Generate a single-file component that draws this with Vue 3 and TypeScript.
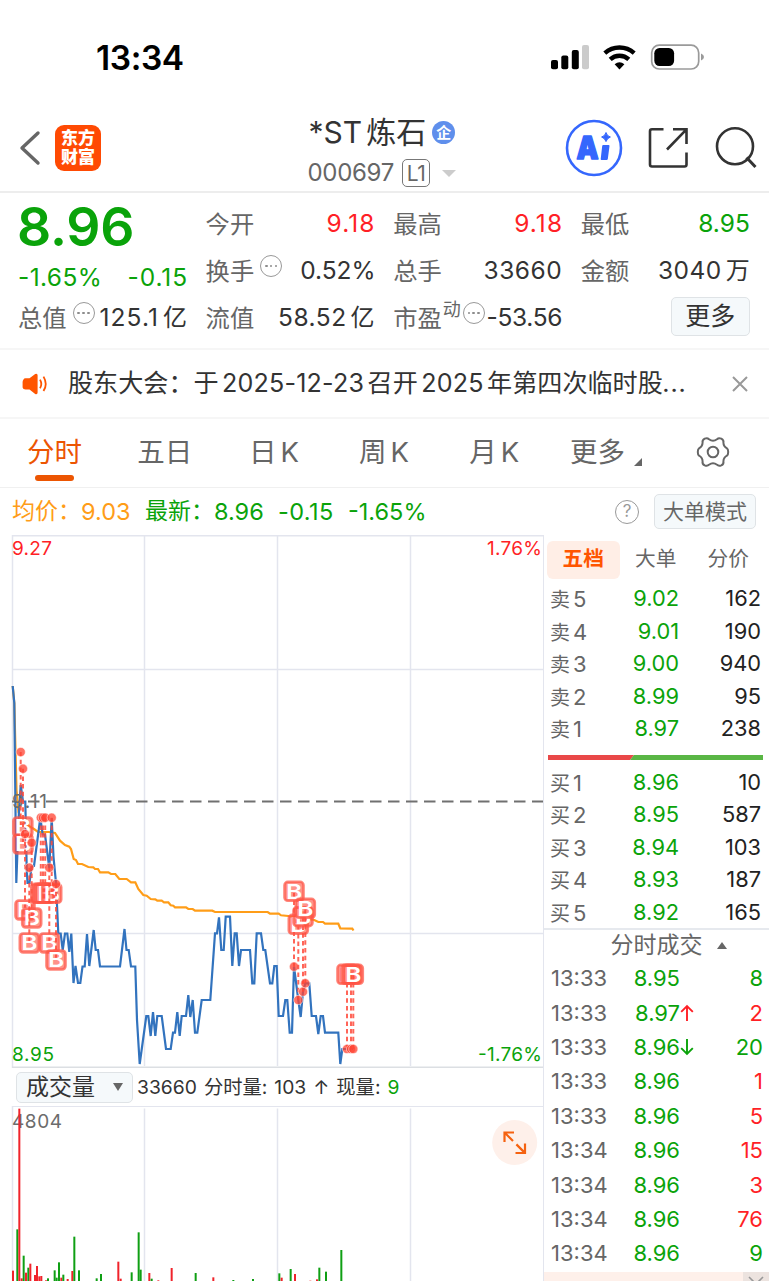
<script setup lang="ts">
interface Level { label: string; n: number; price: string; vol: string }
interface Trade { time: string; price: string; dir?: 'up' | 'down'; vol: string; tone: 'red' | 'green' }
interface Marker { x: number; dot: number; badge: number }
interface Bar { x: number; top: number; up: boolean }

const notice: string[] = ['股东大会：于', '2025-12-23', '召开', '2025', '年第四次临时股', '...']

const tabs: { zh: string; en?: string }[] = [
  { zh: '分时' },
  { zh: '五日' },
  { zh: '日', en: 'K' },
  { zh: '周', en: 'K' },
  { zh: '月', en: 'K' },
]

const sells: Level[] = [
  { label: '卖', n: 5, price: '9.02', vol: '162' },
  { label: '卖', n: 4, price: '9.01', vol: '190' },
  { label: '卖', n: 3, price: '9.00', vol: '940' },
  { label: '卖', n: 2, price: '8.99', vol: '95' },
  { label: '卖', n: 1, price: '8.97', vol: '238' },
]
const buys: Level[] = [
  { label: '买', n: 1, price: '8.96', vol: '10' },
  { label: '买', n: 2, price: '8.95', vol: '587' },
  { label: '买', n: 3, price: '8.94', vol: '103' },
  { label: '买', n: 4, price: '8.93', vol: '187' },
  { label: '买', n: 5, price: '8.92', vol: '165' },
]
const trades: Trade[] = [
  { time: '13:33', price: '8.95', vol: '8', tone: 'green' },
  { time: '13:33', price: '8.97', dir: 'up', vol: '2', tone: 'red' },
  { time: '13:33', price: '8.96', dir: 'down', vol: '20', tone: 'green' },
  { time: '13:33', price: '8.96', vol: '1', tone: 'red' },
  { time: '13:33', price: '8.96', vol: '5', tone: 'red' },
  { time: '13:34', price: '8.96', vol: '15', tone: 'red' },
  { time: '13:34', price: '8.96', vol: '3', tone: 'red' },
  { time: '13:34', price: '8.96', vol: '76', tone: 'red' },
  { time: '13:34', price: '8.96', vol: '9', tone: 'green' },
]

const priceLine =
  '12.7,686 14.3,703 16.3,883 18.7,817 20.7,785 23,801.5 25.3,801.5 26.7,868 27.5,883 29.5,883 31.5,867 34,866 40.3,818 42.7,834.5 45,834.5 49.3,868 51.7,818 53.5,857 56,883 58.3,933.5 60.7,933.5 62.7,950 65,933.5 67.3,933.5 69.3,952 71.3,933.5 73.5,983 75.5,966 78,983 80.3,983 82.5,966.5 84.7,966.5 87,934 89.3,966 93.7,930 95.7,950 98,950 100,966.5 120,966.5 124.5,929 126.5,950 128.7,950 131,966.5 135.3,966.5 137,1020 139.7,1064 146.3,1016 148.3,1016 150.7,1036 153,1012 155.3,1036 157.3,1016 161.7,1016 166,1049 170.7,1049 173,1032.7 175,1032.7 177.3,1012 179.7,1036 181.7,1016 186,1016 188.3,995 190.3,1017 192.7,1000 195,1032.7 197.3,1032.7 201.7,1000 210.3,1000 215,933.3 217,933.3 219,917.3 221.3,950 223.7,950 225.7,916.7 230,916.7 232.3,966 234.7,933.3 236.7,933.3 239,966 241,950 250,950 252.3,983.3 254.3,983.3 256.7,933.3 261,933.3 263.3,950 265.3,950 270,983.3 272.3,983.3 274.3,966 276.7,966 278.7,1016 283,1016 285.3,1000 287.3,1000 289.7,1032.7 292,1032.7 294,966.7 298.3,1000 300.7,1017 303,991.7 305.3,983.3 309.3,983.3 311.7,1016 316,1016 318.3,1034 320.7,1016 323,1016 325,1032.7 338.3,1032.7 340.3,1064 342.3,1049 353,1049'
const avgLine =
  '12.7,686 14.3,703 16.5,790 18.5,812 21,819 25,823 29,826 31.7,827.7 34,829 38,832 49,832 55,833 60,840.7 65,845 69.3,846.7 71,849 73.7,859 76,860 78,864 82,864 88.3,867 93.3,867.3 95,869 98,869 100,872.3 108.3,872.3 111,874 115.3,874 119.3,879 126.7,879 131,882.3 135.3,882.3 138.3,889 143.3,895 146.7,895.7 150.7,899 155.3,899.3 157.3,900.7 161.7,900.7 164,902.3 168.3,902.3 170.7,905.3 173.3,905.7 175,907.3 186,907.3 188.3,909 192.7,909 195,910.7 212.3,910.7 215,912 267.7,912 270,913.7 278.7,913.7 281,915.3 288.3,916 298,918 314.3,920 318.3,922 323,922 325,923.7 338.3,923.7 340.3,928.3 352.3,928.7 353.5,930.5'

const markers: Marker[] = [
  { x: 20.7, dot: 752, badge: 827 },
  { x: 23, dot: 768.7, badge: 844 },
  { x: 25, dot: 834, badge: 910 },
  { x: 31.7, dot: 842.7, badge: 918 },
  { x: 29.3, dot: 867.7, badge: 943 },
  { x: 40.8, dot: 817.7, badge: 893.3 },
  { x: 43, dot: 817.7, badge: 893.3 },
  { x: 45.2, dot: 817.7, badge: 893.3 },
  { x: 51.7, dot: 817.7, badge: 893.3 },
  { x: 49.3, dot: 867.7, badge: 943 },
  { x: 56, dot: 884, badge: 960 },
  { x: 294, dot: 966.7, badge: 891.3 },
  { x: 298.3, dot: 1000, badge: 924.3 },
  { x: 303, dot: 991.7, badge: 916.7 },
  { x: 305.3, dot: 983.3, badge: 908.3 },
  { x: 347, dot: 1049, badge: 974.3 },
  { x: 351, dot: 1049, badge: 974.3 },
  { x: 353.3, dot: 1049, badge: 974.3 },
]

const rawBars: [number, number, 0 | 1][] = [
  [39, 692, 1], [52, 568, 0], [58, 206, 1], [65, 715, 1], [71, 647, 0], [78, 698, 1], [85, 683, 0], [91, 671, 1],
  [105, 705, 1], [111, 678, 1], [118, 709, 1], [124, 708, 1], [138, 721, 1], [144, 715, 0], [164, 691, 0],
  [170, 713, 0], [177, 667, 0], [184, 713, 1], [190, 704, 0], [203, 717, 1], [217, 693, 1], [223, 590, 0],
  [237, 691, 0], [290, 715, 0], [303, 702, 0], [355, 665, 1], [362, 716, 1], [395, 697, 0], [416, 577, 0],
  [422, 689, 0], [448, 699, 1], [455, 716, 0], [475, 721, 1], [515, 684, 1], [587, 699, 0], [640, 712, 1],
  [700, 720, 0], [759, 717, 0], [838, 700, 0], [845, 713, 1], [872, 687, 0], [885, 702, 1], [931, 722, 1],
  [951, 718, 1], [958, 683, 0], [978, 695, 0], [1024, 630, 0],
]
const bars: Bar[] = rawBars.map(([x, y, up]) => ({ x: x / 3 - 1, top: 1040 + y / 3, up: up === 1 }))
const vGrid: number[] = [144.5, 277.5, 410.5]
</script>

<template>
  <div class="phone">
    <header class="status">
      <span class="clock">13:34</span>
      <svg class="status-icons" width="156" height="28" viewBox="550 43 156 28">
        <rect x="551" y="60" width="7" height="9.3" rx="2" />
        <rect x="561.3" y="55.5" width="7" height="13.8" rx="2" />
        <rect x="571.8" y="50" width="7" height="19.3" rx="2" />
        <rect x="582" y="45" width="7" height="24.3" rx="2" fill="#cbcbcb" />
        <g fill="none" stroke="#000" stroke-width="4.4">
          <path d="M604.8 53.2A22 22 0 0 1 634.2 53.2" />
          <path d="M610.2 59.4A13.6 13.6 0 0 1 628.8 59.4" />
        </g>
        <path d="M614.6 64.2Q619.5 60.3 624.4 64.2L619.5 69.4Z" />
        <rect x="651.7" y="45.2" width="47" height="23.8" rx="7.6" fill="none" stroke="#9a9a9a" stroke-width="1.7" />
        <path d="M701 53.5Q704 54.6 704 57Q704 59.4 701 60.5Z" fill="#9a9a9a" />
        <rect x="654.3" y="48" width="19.8" height="18" rx="5.2" />
      </svg>
    </header>

    <nav class="nav">
      <div class="nav-left">
        <svg width="22" height="36" viewBox="0 0 22 36"><path d="M19 3L3 18L19 33" fill="none" stroke="#666" stroke-width="3.4" stroke-linecap="round" stroke-linejoin="round" /></svg>
        <div class="brand"><span>东方</span><span>财富</span></div>
      </div>
      <div class="nav-title">
        <div class="name">
          <span class="st">*ST</span><span class="zh">炼石</span>
          <span class="qi">企</span>
        </div>
        <div class="code"><span>000697</span><span class="l1">L1</span><i class="caret"></i></div>
      </div>
      <svg class="nav-icons" width="194" height="60" viewBox="564 118 194 60">
        <circle cx="594" cy="148" r="27" fill="none" stroke="#3567fd" stroke-width="2.6" />
        <text x="576.5" y="158.6" class="ai" textLength="22" lengthAdjust="spacingAndGlyphs">A</text>
        <path d="M603.2 145H608.6Q609.6 145 609.5 146L607.8 159Q607.6 160 606.6 160H601.6Q600.5 160 600.7 159L602.2 146Q602.3 145 603.2 145Z" fill="#3567fd" />
        <path d="M606 132.5Q607 136.2 610.4 137Q607 138.2 606 141.6Q605 138.2 601.6 137Q605 136.2 606 132.5Z" fill="#3567fd" stroke="#3567fd" stroke-width="1" />
        <g fill="none" stroke="#333" stroke-width="2.6">
          <path d="M663.5 129.3H652Q650 129.3 650 131.3V164.5Q650 166.5 652 166.5H684.5Q686.5 166.5 686.5 164.5V152.5" />
          <path d="M673 129.3H686.5V144M686 129.8L667 149.5" />
          <circle cx="735" cy="146.3" r="18" />
          <path d="M746.5 157.5L755.5 167" stroke-width="3" />
        </g>
      </svg>
    </nav>

    <section class="quote">
      <div class="col first">
        <div class="big">8.96</div>
        <div class="row chg"><span>-1.65%</span><span>-0.15</span></div>
        <div class="row r3"><label>总值</label><i class="dots"><u></u><u></u><u></u></i><b class="w1">125.1<em>亿</em></b></div>
      </div>
      <div class="col">
        <div class="row"><label>今开</label><b class="red w1">9.18</b></div>
        <div class="row"><label>换手</label><i class="dots"><u></u><u></u><u></u></i><b class="w0">0.52%</b></div>
        <div class="row"><label>流值</label><b class="w2">58.52<em>亿</em></b></div>
      </div>
      <div class="col">
        <div class="row"><label>最高</label><b class="red w1">9.18</b></div>
        <div class="row"><label>总手</label><b class="w2">33660</b></div>
        <div class="row pe"><label>市盈</label><sup>动</sup><i class="dots"><u></u><u></u><u></u></i><b>-53.56</b></div>
      </div>
      <div class="col">
        <div class="row"><label>最低</label><b class="green">8.95</b></div>
        <div class="row"><label>金额</label><b class="w2">3040<em>万</em></b></div>
        <div class="row end"><button class="more">更多</button></div>
      </div>
    </section>

    <section class="notice">
      <svg width="27" height="22" viewBox="0 0 27 22">
        <path d="M1.5 6.5Q2 5.3 3.5 5.2H7.5L13.2 0.9Q15.6 0 15.6 2.3V19.6Q15.6 21.8 13.2 21L7.5 16.4H3.5Q1 16.4 .6 14.5V9Q.6 7.5 1.5 6.5Z" fill="#ff5500" />
        <path d="M18 6.6Q20.6 11 18 15.2M21.5 3.6Q26 11 21.5 18" fill="none" stroke="#ff5500" stroke-width="1.8" />
      </svg>
      <p><span v-for="(s, i) in notice" :key="i" :class="{ num: i % 2 === 1 }">{{ s }}</span></p>
      <svg width="16" height="16" viewBox="0 0 16 16"><path d="M1 1L15 15M15 1L1 15" stroke="#999" stroke-width="2" /></svg>
    </section>

    <section class="tabs">
      <div v-for="(t, i) in tabs" :key="i" class="tab" :class="{ on: i === 0 }">
        <span>{{ t.zh }}</span><span v-if="t.en" class="k">{{ t.en }}</span>
      </div>
      <div class="tab last"><span>更多</span><i class="corner"></i></div>
      <svg class="gear" width="34" height="32" viewBox="-17 -16 34 32">
        <g fill="none" stroke="#666" stroke-width="2">
          <circle r="5.3" />
          <path d="M-8.3 -13.4Q-5.5 -14.5 -4 -12.7Q0 -9.8 4 -12.7Q5.5 -14.5 8.3 -13.4Q11 -12 10.4 -9.4Q10.5 -5.3 14 -3.6Q15.2 -2.8 15.2 0Q15.2 2.8 14 3.6Q10.5 5.3 10.4 9.4Q11 12 8.3 13.4Q5.5 14.5 4 12.7Q0 9.8 -4 12.7Q-5.5 14.5 -8.3 13.4Q-11 12 -10.4 9.4Q-10.5 5.3 -14 3.6Q-15.2 2.8 -15.2 0Q-15.2 -2.8 -14 -3.6Q-10.5 -5.3 -10.4 -9.4Q-11 -12 -8.3 -13.4Z" />
        </g>
      </svg>
    </section>

    <section class="legend">
      <span class="avg zh">均价：</span><span class="avg n1">9.03</span>
      <span class="green zh">最新：</span><span class="green n2">8.96</span><span class="green n3">-0.15</span><span class="green n4">-1.65%</span>
      <span class="help">?</span>
      <button class="mode">大单模式</button>
    </section>

    <main class="main">
      <div class="left">
        <svg class="chart" width="544" height="533" viewBox="0 535 544 533">
          <g stroke="#e3e5ee" stroke-width="1.5" fill="none">
            <path d="M12 535.7H544M12 669.5H544M12 933.5H544M12.5 535V1068" />
            <path v-for="x in vGrid" :key="x" :d="`M${x} 535V1066`" />
          </g>
          <path d="M12 1067.3H544" stroke="#dcdfe3" stroke-width="1.5" />
          <path d="M12 801.6H544" stroke="#707070" stroke-width="2" stroke-dasharray="11.5 6.5" stroke-dashoffset="2" />
          <polyline :points="avgLine" fill="none" stroke="#ff9d18" stroke-width="2.2" />
          <polyline :points="priceLine" fill="none" stroke="#3273be" stroke-width="2.2" />
          <text x="12" y="808" class="g" textLength="35">9.11</text>
          <g v-for="(m, i) in markers" :key="i">
            <path :d="`M${m.x} ${m.dot}V${m.badge}`" stroke="#ff4b3c" stroke-width="2" stroke-dasharray="4.5 3.2" opacity="0.85" />
            <circle :cx="m.x" :cy="m.dot" r="4.6" fill="#ff4433" fill-opacity="0.76" stroke="#fff" stroke-width="0.7" stroke-opacity="0.7" />
            <rect :x="Math.max(m.x, 22.8) - 9.5" :y="m.badge - 9.5" width="19" height="19" rx="3.4" fill="#ff4b3c" fill-opacity="0.6" stroke="#ff5848" stroke-opacity="0.72" stroke-width="2.6" />
            <text :x="Math.max(m.x, 22.8) - 8" :y="m.badge + 7.4" class="mark" textLength="16.2" lengthAdjust="spacingAndGlyphs">B</text>
          </g>
          <text x="12" y="555" class="r" textLength="40">9.27</text>
          <text x="487" y="555" class="r" textLength="55">1.76%</text>
          <text x="12" y="1060.5" class="n" textLength="42">8.95</text>
          <text x="478" y="1060.5" class="n" textLength="64">-1.76%</text>
        </svg>
        <div class="volhead">
          <button class="volbtn">成交量<i></i></button>
          <p><span>33660</span><span>分时量:</span><span>103</span><span class="arrow">↑</span><span>现量:</span><span class="green">9</span></p>
        </div>
        <svg class="vol" width="544" height="176" viewBox="0 1106 544 176">
          <g stroke="#e3e5ee" stroke-width="1.5">
            <path d="M12 1106.3H544M12.5 1106V1281" />
            <path v-for="x in vGrid" :key="x" :d="`M${x} 1108.5V1281`" />
          </g>
          <text x="12" y="1128" class="g" textLength="50">4804</text>
          <rect v-for="(b, i) in bars" :key="i" :x="b.x" :y="b.top" width="2" :height="1281 - b.top" :fill="b.up ? '#f0232b' : '#0f9f14'" />
          <circle cx="514.7" cy="1142.5" r="22.5" fill="#fef0ea" />
          <g fill="none" stroke="#f56210" stroke-width="2.2">
            <path d="M504.5 1142V1132.5H514M504.8 1132.8L513 1141" />
            <path d="M525 1143.5V1153H515.5M524.6 1152.6L516.4 1144.4" />
          </g>
        </svg>
      </div>

      <aside class="side">
        <div class="sidetabs"><span class="sel">五档</span><span>大单</span><span>分价</span></div>
        <div class="book">
          <div v-for="l in sells" :key="l.price" class="lvl"><span class="lb">{{ l.label }}<em>{{ l.n }}</em></span><span class="pr">{{ l.price }}</span><span class="vo">{{ l.vol }}</span></div>
        </div>
        <svg class="ratio" width="215" height="5" viewBox="0 0 215 5"><path d="M0 0H86L82 5H0Z" fill="#e94848" /><path d="M86 0H215V5H82Z" fill="#59b645" /></svg>
        <div class="book">
          <div v-for="l in buys" :key="l.price" class="lvl"><span class="lb">{{ l.label }}<em>{{ l.n }}</em></span><span class="pr">{{ l.price }}</span><span class="vo">{{ l.vol }}</span></div>
        </div>
        <div class="dealhead">分时成交<i></i></div>
        <div class="deals">
          <div v-for="(t, i) in trades" :key="i" class="deal">
            <span class="tm">{{ t.time }}</span>
            <span class="pr">{{ t.price }}</span>
            <span class="dir">
              <svg v-if="t.dir" width="14" height="18" viewBox="0 0 14 18" :class="t.dir"><path d="M7 17V2M1.2 7.8L7 2L12.8 7.8" fill="none" stroke="currentColor" stroke-width="1.9" /></svg>
            </span>
            <span class="vo" :class="t.tone">{{ t.vol }}</span>
          </div>
        </div>
        <div class="promo"><span><svg width="16" height="16" viewBox="0 0 16 16"><path d="M1 1L15 15M15 1L1 15" stroke="#999" stroke-width="1.6" /></svg></span></div>
      </aside>
    </main>
  </div>
</template>

<style>
body { margin: 0; background: #fff; overflow: hidden; }
</style>

<style scoped>
.phone { width: 769px; height: 1282px; overflow: hidden; background: #fff; color: #333; font-family: Inter, "Noto Sans CJK SC", sans-serif; font-size: 24px; line-height: 1; display: flex; flex-direction: column; }
.phone * { box-sizing: border-box; }
p { margin: 0; }
em, i { font-style: normal; }
u { text-decoration: none; }
b { font-weight: 400; }
button { font: inherit; line-height: 1; border: 1.5px solid #dfe3e6; border-radius: 5px; background: #f5f9fb; padding: 0; white-space: nowrap; }
.red { color: #ff1f26; }
.green { color: #0aa30a; }

.status { height: 102px; flex: none; display: flex; justify-content: space-between; padding: 43px 63px 0 96px; }
.clock { font-size: 33.5px; font-weight: 600; color: #000; line-height: 31px; letter-spacing: -0.4px; }

.nav { height: 91px; flex: none; border-bottom: 2px solid #ededed; display: flex; justify-content: space-between; padding: 0 11px 0 19px; }
.nav-left { display: flex; height: 92px; align-items: center; gap: 14px; }
.brand { width: 46px; height: 46px; border-radius: 9px; background: #ff4a03; color: #fff; font-size: 17px; font-weight: 900; line-height: 19.5px; display: flex; flex-direction: column; align-items: center; justify-content: center; }
.nav-title { width: 150px; margin-left: 102px; padding-top: 14px; }
.name { height: 32px; display: flex; align-items: center; white-space: nowrap; }
.st { font-size: 30px; letter-spacing: 0; }
.name .zh { font-size: 30px; margin-left: 4px; }
.qi { width: 23px; height: 23px; border-radius: 50%; background: #5f8fec; color: #fff; font-size: 15px; font-weight: 700; display: grid; place-items: center; margin-left: 6px; flex: none; }
.code { display: flex; align-items: center; height: 30px; margin-top: 10px; margin-left: -1px; color: #666; white-space: nowrap; letter-spacing: -0.3px; }
.l1 { width: 28px; height: 28px; border: 1.6px solid #777; border-radius: 5px; font-size: 21px; letter-spacing: -0.5px; margin-left: 8px; display: grid; place-items: center; }
.caret { border: 7px solid transparent; border-top: 7.5px solid #ccc; border-bottom: 0; margin-left: 12px; }
.nav-icons { margin-top: 16px; }
.ai { font-size: 32px; font-weight: 900; fill: #3567fd; stroke: #3567fd; stroke-width: 1.6px; stroke-linejoin: round; }

.quote { height: 157px; flex: none; border-bottom: 2px solid #f6f6f6; display: grid; grid-template-columns: repeat(4, 169px); column-gap: 18.6px; padding: 8px 18px 0; align-content: start; }
.row { height: 47px; display: flex; align-items: center; justify-content: space-between; white-space: nowrap; font-size: 24.5px; }
.row label { color: #666; font-size: 24.3px; padding-bottom: 1px; }
.row b { padding-bottom: 2px; }
.row em { margin-left: 4px; font-size: 24px; letter-spacing: 0; }
.w0 { margin-right: -1px; }
.w1 { letter-spacing: 1.1px; margin-right: -1px; }
.w2 { letter-spacing: 0.5px; }
.big { font-size: 53.5px; font-weight: 600; color: #0aa30a; height: 54px; line-height: 51px; letter-spacing: -0.2px; margin-left: -1px; }
.chg { color: #0aa30a; height: 44px; }
.chg span:first-child { letter-spacing: 0.4px; }
.chg span:last-child { letter-spacing: 0.9px; margin-right: -1px; }
.first .r3 { height: 39px; }
.first .w1 { margin-right: 0; }
.dots { width: 22px; height: 22px; border: 1.8px solid #999; border-radius: 50%; flex: none; display: flex; align-items: center; justify-content: center; gap: 2.4px; margin: 0 auto 11px 6px; }
.dots u { width: 2.6px; height: 2.6px; border-radius: 50%; background: #8c8c8c; }
.pe sup { font-size: 18px; color: #666; margin: 0 0 17px 1px; line-height: 1; }
.pe .dots { margin-left: 2px; }
.pe b { letter-spacing: -0.3px; }
.row.end { justify-content: flex-end; }
.more { width: 79px; height: 39px; color: #333; font-size: 25px; margin-top: -5px; }

.notice { height: 69px; flex: none; border-bottom: 2px solid #f6f6f6; display: flex; align-items: center; padding: 0 21px 0 22px; color: #333; }
.notice p { display: flex; align-items: baseline; gap: 3.4px; margin-left: 19px; flex: 1; font-size: 25.1px; white-space: nowrap; }
.notice .num { letter-spacing: 0.2px; }
.notice .num:last-child { margin-left: -4px; letter-spacing: 1px; }

.tabs { height: 69px; flex: none; border-bottom: 1.5px solid #f0f0f0; display: flex; color: #666; font-size: 27.5px; padding-left: 27px; }
.tab { width: 110.2px; height: 67px; display: flex; align-items: center; position: relative; white-space: nowrap; }
.tab .k { margin-left: 4px; }
.tab:has(.k) { padding-left: 1.5px; }
.tab.on { color: #ec5502; }
.tab.on::after { content: ""; position: absolute; left: 8px; bottom: 5px; width: 39px; height: 6px; border-radius: 3px; background: #ec5502; }
.tab.last { width: 117px; margin-left: -8px; }
.corner { border-left: 8px solid transparent; border-bottom: 8px solid #666; margin: 18px 0 0 9px; }
.gear { margin: 17px 0 0 9px; }

.legend { height: 47px; flex: none; display: flex; align-items: center; padding: 0 13px 0 12px; font-size: 23.5px; white-space: nowrap; }
.legend .zh { font-size: 23px; width: 69px; }
.avg { color: #ff9d18; }
.n1 { width: 64px; }
.n2 { width: 64px; }
.n3 { width: 70px; letter-spacing: 0.4px; }
.help { margin-left: auto; width: 24px; height: 24px; border: 1.7px solid #999; border-radius: 50%; color: #999; font-size: 17px; display: grid; place-items: center; }
.mode { width: 102px; height: 35px; margin-left: 15px; color: #666; font-size: 21px; }

.main { display: flex; flex: 1; min-height: 0; }
.left { width: 544px; flex: none; display: flex; flex-direction: column; }
.chart, .vol { display: block; flex: none; }
.chart text, .vol text { font-size: 19px; }
.r { fill: #ff1f26; }
.n { fill: #0aa30a; }
.g { fill: #6c6c6c; }
.chart text.mark { font-size: 20.5px; font-weight: 600; fill: #fff; }
.volhead { height: 38px; display: flex; align-items: center; padding-left: 16px; }
.volbtn { width: 117px; height: 31px; color: #333; font-size: 23px; display: flex; align-items: center; padding-left: 9px; }
.volbtn i { border: 5px solid transparent; border-top: 8px solid #666; border-bottom: 0; margin-left: 18px; }
.volhead p { display: flex; align-items: baseline; font-size: 19.3px; gap: 7px; margin-left: 4px; padding-top: 2px; white-space: nowrap; }

.side { flex: 1; border-left: 1.5px solid #e3e5ee; margin-left: -1px; display: flex; flex-direction: column; height: 746px; overflow: hidden; }
.sidetabs { height: 48px; flex: none; display: flex; align-items: center; color: #666; font-size: 20.7px; padding: 1px 0 0 3px; }
.sidetabs span { width: 72.5px; height: 38px; display: grid; place-items: center; border-radius: 6px; }
.sidetabs .sel { background: #ffeee6; color: #ff5500; font-weight: 700; }
.lvl { height: 32.5px; display: grid; grid-template-columns: 55px 74px 82px; align-items: center; padding-left: 6px; font-size: 21.8px; }
.lvl .lb { color: #666; font-size: 20px; white-space: nowrap; }
.lb em { margin-left: 3px; font-size: 22px; }
.pr { color: #0aa30a; text-align: right; }
.vo { text-align: right; color: #222; }
.vo.red { color: #ff1f26; }
.vo.green { color: #0aa30a; }
.ratio { margin: 9px 0 7px 4px; flex: none; }
.dealhead { height: 33px; flex: none; border-top: 2px solid #e6e9ee; margin-top: -1px; display: flex; align-items: center; justify-content: center; color: #666; font-size: 23px; padding-left: 24px; }
.dealhead i { border: 5px solid transparent; border-bottom: 7px solid #666; border-top: 0; margin-left: 14px; }
.deal { height: 34.4px; display: grid; grid-template-columns: 58px 71px 16px 67px; align-items: center; padding-left: 7px; font-size: 22px; }
.tm { color: #666; }
.dir { display: flex; }
.up { color: #ff1f26; }
.down { color: #0aa30a; transform: rotate(180deg); }
.promo { height: 9px; flex: none; background: #fef0ea; display: flex; justify-content: flex-end; overflow: hidden; margin-top: 1px; }
.promo span { width: 26px; background: #ece3df; display: flex; justify-content: center; padding-top: 4px; }
.promo svg { flex: none; }
</style>
